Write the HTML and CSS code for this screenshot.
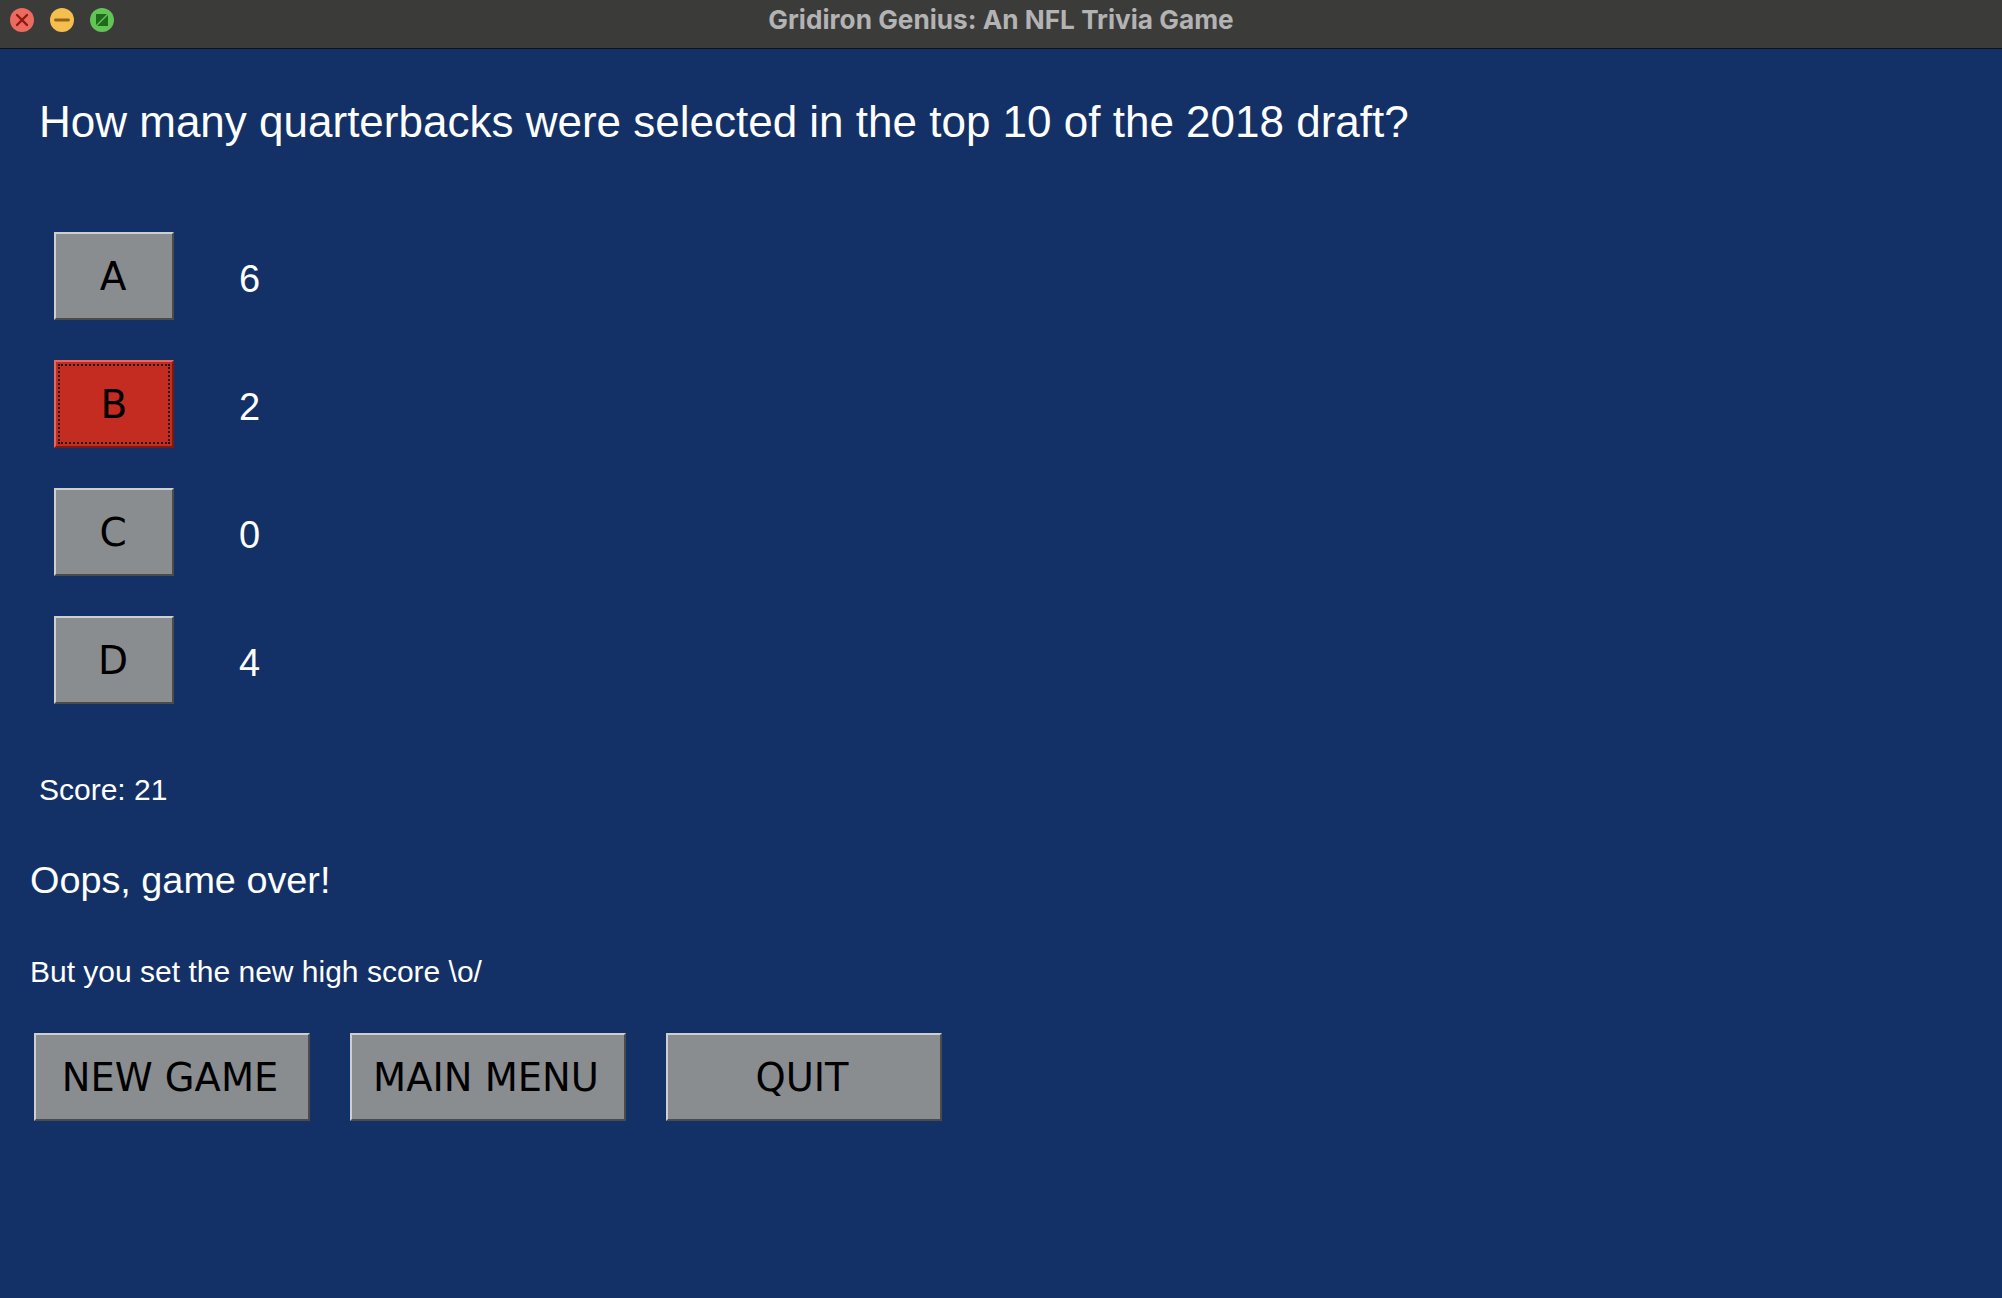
FILE: index.html
```html
<!DOCTYPE html>
<html lang="en">
<head>
<meta charset="utf-8">
<title>Gridiron Genius: An NFL Trivia Game</title>
<link rel="stylesheet" href="styles.css">
</head>
<body>
<div class="window">
  <header class="titlebar">
    <div class="lights">
      <svg class="light" viewBox="-12 -12 24 24" width="24" height="24"><circle r="12" fill="#ed6a5e"/><path d="M-5,-5 L5,5 M5,-5 L-5,5" stroke="#8d1a10" stroke-width="2.4" stroke-linecap="round"/></svg>
      <svg class="light" viewBox="-12 -12 24 24" width="24" height="24"><circle r="12" fill="#f5bf4f"/><path d="M-6.5,0 L6.5,0" stroke="#95621a" stroke-width="2.8" stroke-linecap="round"/></svg>
      <svg class="light" viewBox="-12 -12 24 24" width="24" height="24"><circle r="12" fill="#61c454"/><path d="M-6,-6 L5,-6 L-6,5 Z M6,6 L-5,6 L6,-5 Z" fill="#1e6a1b"/></svg>
    </div>
    <div class="title">Gridiron Genius: An NFL Trivia Game</div>
    <div></div>
  </header>

  <main class="content">
    <h1 class="question">How many quarterbacks were selected in the top 10 of the 2018 draft?</h1>

    <div class="options">
      <div class="option"><div class="btn btn-letter">A</div><span class="answer">6</span></div>
      <div class="option"><div class="btn btn-letter btn-wrong"><span class="focus">B</span></div><span class="answer">2</span></div>
      <div class="option"><div class="btn btn-letter">C</div><span class="answer">0</span></div>
      <div class="option"><div class="btn btn-letter">D</div><span class="answer">4</span></div>
    </div>

    <p class="score">Score: 21</p>
    <p class="gameover">Oops, game over!</p>
    <p class="highscore">But you set the new high score \o/</p>

    <div class="actions">
      <div class="btn btn-action">NEW GAME</div>
      <div class="btn btn-action">MAIN MENU</div>
      <div class="btn btn-action">QUIT</div>
    </div>
  </main>
</div>
</body>
</html>
```

FILE: styles.css
```css
html, body {
  margin: 0;
  padding: 0;
}

body {
  background: #133166;
  width: 2002px;
  height: 1298px;
  overflow: hidden;
  font-family: "Liberation Sans", Arial, sans-serif;
  color: #ffffff;
}

.titlebar {
  height: 48px;
  background: #3b3b3a;
  border-bottom: 1px solid #121212;
  display: grid;
  grid-template-columns: 1fr auto 1fr;
  align-items: center;
}

.lights {
  display: flex;
  gap: 16px;
  padding-left: 10px;
  margin-top: -8px;
}

.light {
  display: block;
}

.title {
  font-family: Inter, "Noto Sans", sans-serif;
  font-weight: 700;
  font-size: 26.2px;
  line-height: 30px;
  color: #b3b3b3;
  margin-top: -8px;
}

.content {
  padding-top: 48px;
}

.question {
  margin: 0 0 0 39px;
  font-weight: normal;
  font-size: 44px;
  line-height: 50px;
}

.options {
  display: flex;
  flex-direction: column;
  gap: 40px;
  margin: 85px 0 0 54px;
}

.option {
  display: flex;
  align-items: center;
  gap: 65px;
}

.btn {
  box-sizing: border-box;
  background: #8a8d90;
  border: 2px solid;
  border-color: #cfcfcf #4b4b4b #4b4b4b #cfcfcf;
  color: #000000;
  font-family: "DejaVu Sans", Verdana, sans-serif;
  display: flex;
  align-items: center;
  justify-content: center;
}

.btn-letter {
  width: 120px;
  height: 88px;
  font-size: 39px;
  padding-right: 2px;
}

.btn-wrong {
  background: #c42b21;
  border-color: #e8675c #7e1912 #7e1912 #e8675c;
  padding: 2px;
}

.focus {
  flex: 1;
  align-self: stretch;
  display: flex;
  align-items: center;
  justify-content: center;
  border: 2px dotted #1a0503;
}

.answer {
  font-size: 38px;
  line-height: 38px;
  margin-top: 6px;
}

.score {
  margin: 69px 0 0 39px;
  font-size: 30px;
  line-height: 34px;
}

.gameover {
  margin: 52px 0 0 30px;
  font-size: 37.8px;
  line-height: 43px;
}

.highscore {
  margin: 53px 0 0 30px;
  font-size: 30px;
  line-height: 34px;
}

.actions {
  display: flex;
  gap: 40px;
  margin: 44px 0 0 34px;
}

.btn-action {
  width: 276px;
  height: 88px;
  font-size: 38.4px;
  padding-right: 4px;
}
```
